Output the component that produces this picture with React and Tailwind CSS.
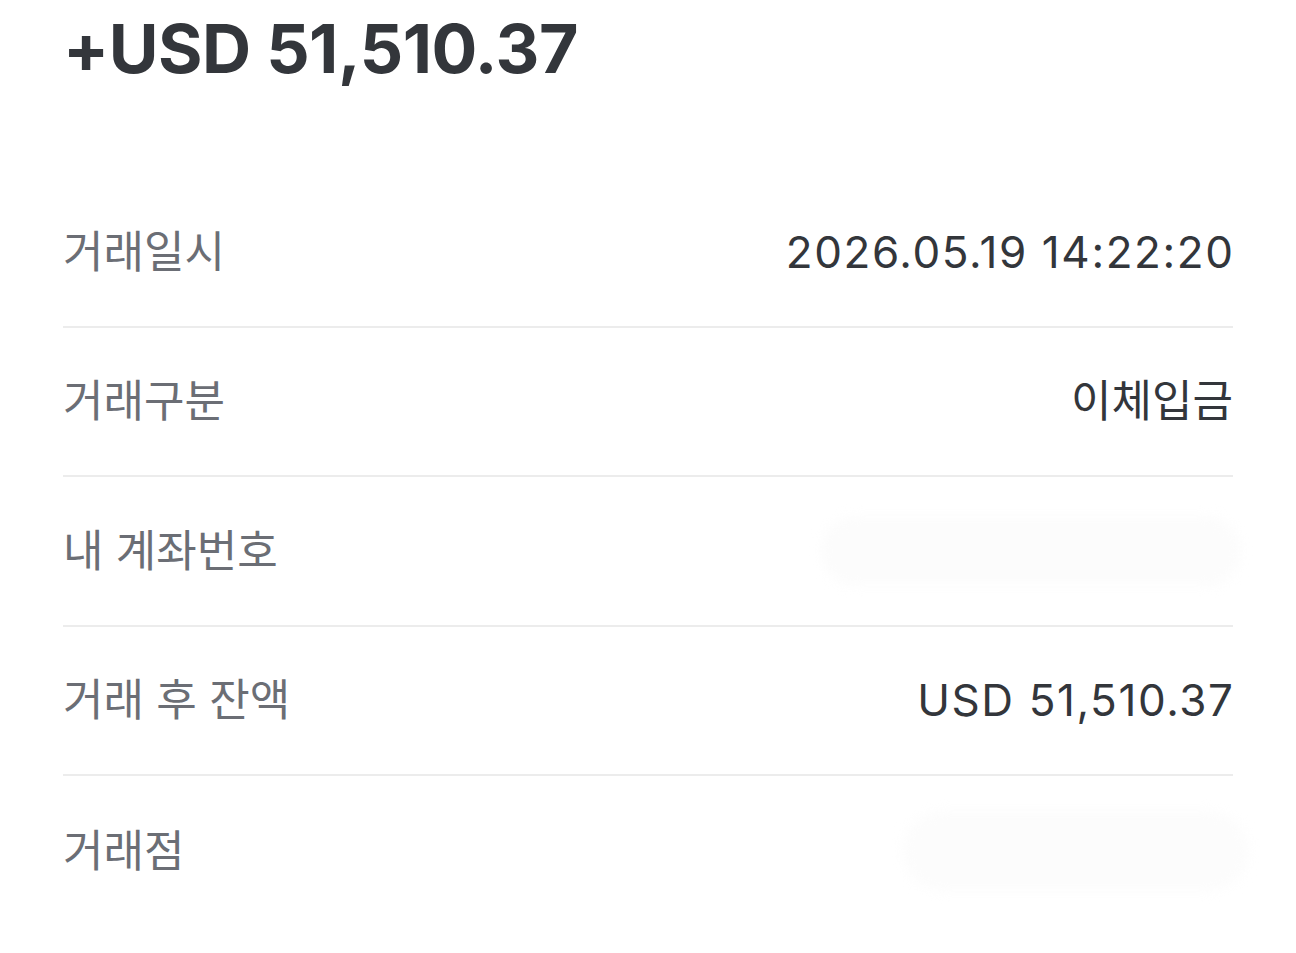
export default function App() {
  const rows = [
    { label: "거래일시", value: "2026.05.19 14:22:20", num: true },
    { label: "거래구분", value: "이체입금" },
    { label: "내 계좌번호", blur: "w-[420px] h-[70px] mr-[-8px]" },
    { label: "거래 후 잔액", value: "USD 51,510.37", num: true },
    { label: "거래점", blur: "w-[345px] h-[80px] mr-[-15px]" },
  ];
  return (
    <div
      className="w-[1296px] h-[953px] bg-white px-[63px] overflow-hidden"
      style={{ fontFamily: '"Inter", "Noto Sans CJK KR", sans-serif' }}
    >
      <div className="pt-[8px] h-[178px]">
        <div className="text-[68px] leading-[80px] font-bold text-[#33363b] tracking-[-0.5px]">
          +USD 51,510.37
        </div>
      </div>
      {rows.map((r, i) => (
        <div
          key={i}
          className={`flex items-center justify-between h-[149.5px] ${i < rows.length - 1 ? "border-b-2 border-[#ececec]" : ""}`}
        >
          <div className="text-[44px] text-[#6b6e75]">{r.label}</div>
          {r.value ? (
            <div className={`text-[44px] text-[#33363b] ${r.num ? "tracking-[1.6px] mr-[-1.6px]" : ""}`}>{r.value}</div>
          ) : (
            <div className={`${r.blur} rounded-full bg-[#fcfcfc] blur-[6px]`} />
          )}
        </div>
      ))}
    </div>
  );
}
